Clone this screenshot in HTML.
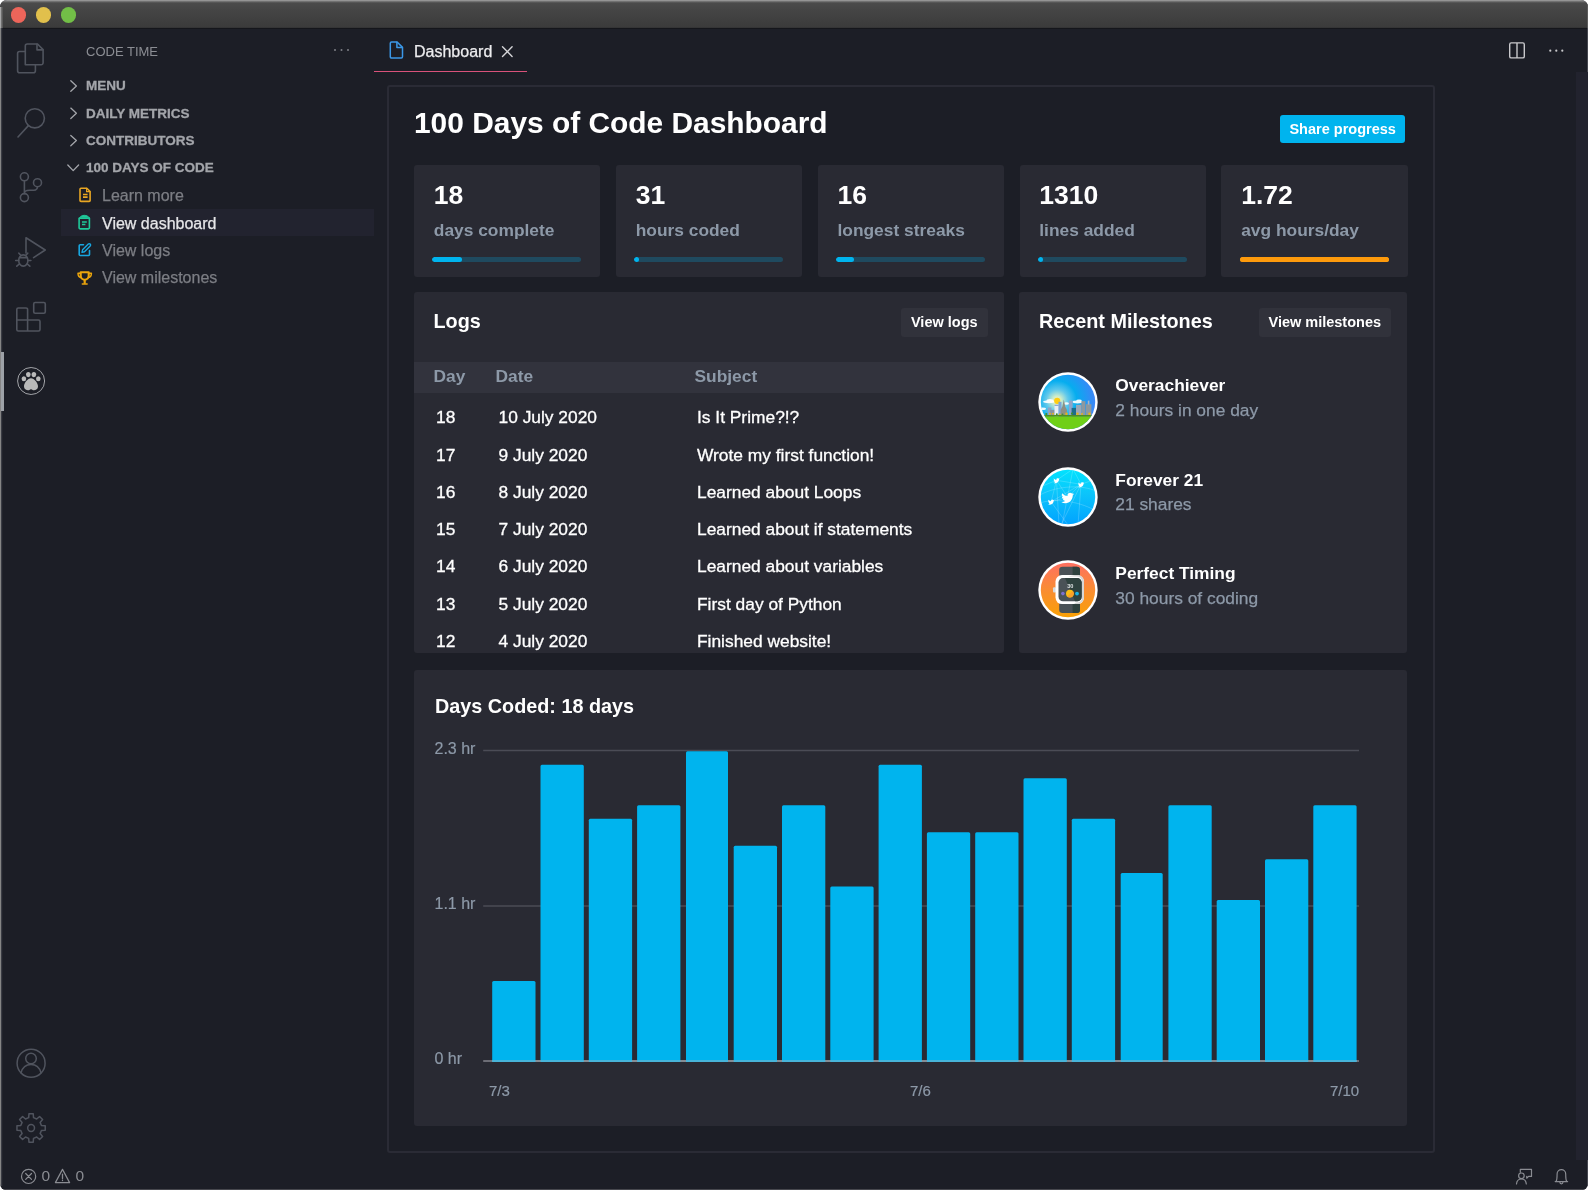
<!DOCTYPE html>
<html lang="en">
<head>
<meta charset="utf-8">
<title>100 Days of Code Dashboard</title>
<style>
*{box-sizing:border-box;margin:0;padding:0}
html,body{width:1588px;height:1190px;overflow:hidden;background:#fff;font-family:"Liberation Sans",sans-serif;}
#win{will-change:transform;position:absolute;left:0;top:0;width:1588px;height:1190px;background:#1c1e26;border-radius:7px 7px 6px 6px;overflow:hidden;}
#edgeL{position:absolute;left:0;top:28px;width:3px;height:1158px;background:linear-gradient(90deg,#858585 0,#858585 1px,#3a3c44 1px,#3a3c44 2px,#22242c 2px,#22242c 3px);}
#edgeT{position:absolute;left:0;top:7px;width:3px;height:21px;background:linear-gradient(90deg,#a8a8a8 0,#a8a8a8 1px,#707070 1px,#707070 2px,#595959 2px,#595959 3px);}
#titlebar{position:absolute;left:0;top:0;width:1588px;height:29px;background:linear-gradient(#9c9c9c 0,#8c8c8c 1px,#6c6c6c 1.6px,#4b4b4b 3px,#454545 10px,#3b3b3b 27.4px,#15161b 28px,#15161b 29px);}
#edgeR{position:absolute;left:1587px;top:4px;width:1px;height:1182px;background:linear-gradient(#5c5c5c 0,#5c5c5c 24px,#45474f 24px);}
.tl{position:absolute;top:7.200px;width:15.400px;height:15.400px;border-radius:50%;}
.abs{position:absolute}
.ico{position:absolute;fill:none;stroke:#50545e;stroke-width:1.6;stroke-linecap:round;stroke-linejoin:round}
/* sidebar */
.sec{-webkit-text-stroke:.3px #a3a5aa;position:absolute;left:86px;font-size:13.5px;font-weight:bold;color:#a3a5aa;letter-spacing:0;white-space:nowrap;line-height:16px}
.item{-webkit-text-stroke-width:.25px;position:absolute;left:102px;font-size:16px;color:#7c7e84;white-space:nowrap;line-height:20px}
.chev{position:absolute;fill:none;stroke:#a3a5aa;stroke-width:1.3;stroke-linecap:round;stroke-linejoin:round}
/* webview */
#panel{position:absolute;left:386.500px;top:84.800px;width:1048px;height:1068px;border:2px solid #2a2b35;border-radius:3px}
.card{position:absolute;top:165px;width:186.3px;height:112px;background:#292a33;border-radius:3px}
.card .n{position:absolute;left:19.8px;top:15px;font-size:26.500px;font-weight:bold;color:#fff;line-height:30px;white-space:nowrap}
.card .l{position:absolute;left:19.8px;top:54px;font-size:17.360px;font-weight:bold;color:#8d99a8;line-height:22px;white-space:nowrap}
.card .bar{position:absolute;left:18.3px;top:92px;width:149px;height:5px;border-radius:3px;background:#1f4a5f;overflow:hidden}
.card .bar i{display:block;height:5px;border-radius:3px;background:#00b4ee}
.box{position:absolute;background:#292a33;border-radius:3px}
.h2{position:absolute;font-size:19.800px;font-weight:bold;color:#fff;line-height:24px;white-space:nowrap}
.btn{position:absolute;background:#31323b;border-radius:3px;color:#fff;font-weight:bold;font-size:14.5px;line-height:30px;text-align:center;white-space:nowrap}
.row{-webkit-text-stroke-width:.3px;position:absolute;left:0;width:590px;height:20px;font-size:17.360px;color:#fff;line-height:20px;white-space:nowrap}
.row span{position:absolute;top:0}
.ms-t{position:absolute;left:96.300px;font-size:17.360px;font-weight:bold;color:#fff;line-height:20px;white-space:nowrap}
.ms-s{-webkit-text-stroke-width:.25px;position:absolute;left:96.300px;font-size:17.360px;color:#8d99a8;line-height:20px;white-space:nowrap}
.ax{-webkit-text-stroke-width:.2px;position:absolute;font-size:15px;color:#8d99a8;line-height:18px;white-space:nowrap}
</style>
</head>
<body>
<div id="win">
  <div id="titlebar"></div>
  <div class="tl" style="left:10.800px;background:#ed655a"></div>
  <div class="tl" style="left:35.700px;background:#e1c04c"></div>
  <div class="tl" style="left:60.600px;background:#72be47"></div>
  <div id="edgeR"></div><div id="edgeL"></div><div id="edgeT"></div>

  <!-- ACTIVITYBAR -->
  <svg class="ico" style="left:0;top:28px" width="62" height="1130" viewBox="0 28 62 1130">
    <!-- files -->
    <path d="M25.3 64.8V46a2 2 0 0 1 2-2h10.2l5.6 5.6v13.2a2 2 0 0 1-2 2z"/>
    <path d="M37 44.3v5.6h5.8"/>
    <path d="M25.3 51.5h-5.7a2 2 0 0 0-2 2v17.3a2 2 0 0 0 2 2h13.8a2 2 0 0 0 2-2v-5.8"/>
    <!-- search -->
    <circle cx="34.8" cy="118.3" r="9.6"/>
    <path d="M28.4 125.6L18 137"/>
    <!-- source control -->
    <circle cx="24.4" cy="176.8" r="4"/>
    <circle cx="37.5" cy="182.7" r="4"/>
    <circle cx="24.4" cy="197.6" r="4"/>
    <path d="M24.4 180.8v12.8M37.5 186.7c0 4-3.5 3.6-8 3.6-3 0-5.1 1-5.1 3.2"/>
    <!-- debug -->
    <path d="M26 253V237.8L45.2 250L33.6 257.6"/>
    <ellipse cx="23.3" cy="260.5" rx="4.6" ry="5.6"/>
    <path d="M19.6 257.6h7.4M20.5 255l-1.6-1.8M26.100 255l1.600-1.800M18.7 260.500h-3M27.900 260.500h3M19.300 264l-2.500 2.200M27.300 264l2.500 2.200"/>
    <!-- extensions -->
    <path d="M27.600 320V309.5a1.500 1.500 0 0 0-1.500-1.500H18.300a1.500 1.500 0 0 0-1.500 1.500V329.500a1.500 1.500 0 0 0 1.500 1.500H38.500a1.500 1.500 0 0 0 1.500-1.500V321.500a1.500 1.500 0 0 0-1.500-1.500H16.800M27.600 320v11"/>
    <rect x="33.700" y="302.500" width="11.600" height="10.800" rx="1.500"/>
    <!-- account -->
    <circle cx="31.100" cy="1063.200" r="14" stroke-width="1.500"/>
    <circle cx="31" cy="1058.500" r="5.300" stroke-width="1.500"/>
    <path d="M21 1072.800c1.500-5.500 5.500-8.300 10-8.300s8.500 2.800 10 8.300" stroke-width="1.500"/>
    <!-- gear -->
    <circle cx="31.100" cy="1128" r="3.400" stroke-width="1.500"/>
    <path stroke-width="1.500" d="M28.68 1117.68L28.96 1113.86L33.24 1113.86L33.52 1117.68L36.69 1118.99L39.59 1116.49L42.61 1119.51L40.11 1122.41L41.42 1125.58L45.24 1125.86L45.24 1130.14L41.42 1130.42L40.11 1133.59L42.61 1136.49L39.59 1139.51L36.69 1137.01L33.52 1138.32L33.24 1142.14L28.96 1142.14L28.68 1138.32L25.51 1137.01L22.61 1139.51L19.59 1136.49L22.09 1133.59L20.78 1130.42L16.96 1130.14L16.96 1125.86L20.78 1125.58L22.09 1122.41L19.59 1119.51L22.61 1116.49L25.51 1118.99Z"/>
  </svg>
  <!-- paw active -->
  <div class="abs" style="left:1px;top:351.500px;width:3px;height:59.500px;background:#9da1a7"></div>
  <svg class="abs" style="left:16px;top:366px" width="30" height="30" viewBox="0 0 30 30">
    <circle cx="15.100" cy="15" r="13.500" fill="none" stroke="#a2a4a8" stroke-width="1"/>
    <g fill="#b9b9b9">
      <ellipse cx="7.900" cy="12.800" rx="2.300" ry="2.500"/>
      <ellipse cx="12.300" cy="8.600" rx="2.300" ry="2.600"/>
      <ellipse cx="17.900" cy="8.600" rx="2.300" ry="2.600"/>
      <ellipse cx="22.300" cy="12.800" rx="2.300" ry="2.500"/>
      <path d="M15 12.300c3.200 0 7 4.800 7 8.200 0 2.600-2.200 3.700-4 3.700-1.300 0-2.300-.8-3-1.300-.7.500-1.700 1.300-3 1.300-1.800 0-4-1.100-4-3.700 0-3.400 3.800-8.200 7-8.200z"/>
    </g>
  </svg>
  <!-- SIDEBAR -->
  <div class="abs" id="ct" style="left:86px;top:43.5px;font-size:13px;color:#8b8d93;line-height:16px;white-space:nowrap">CODE TIME</div>
  <svg class="abs" style="left:332px;top:47px" width="20" height="6"><g fill="#7e8087"><circle cx="3" cy="3" r="1"/><circle cx="9.500" cy="3" r="1"/><circle cx="16" cy="3" r="1"/></g></svg>
  <svg class="chev" style="left:66px;top:78px" width="16" height="100" viewBox="66 78 16 100">
    <path d="M70.800 80.800L76.400 86L70.800 91.200"/>
    <path d="M70.800 108.100L76.400 113.300L70.800 118.500"/>
    <path d="M70.800 135.400L76.400 140.600L70.800 145.800"/>
    <path d="M67.800 165L73.200 170.600L78.600 165"/>
  </svg>
  <div class="sec" id="s1" style="top:78.3px">MENU</div>
  <div class="sec" id="s2" style="top:105.5px">DAILY METRICS</div>
  <div class="sec" id="s3" style="top:132.7px">CONTRIBUTORS</div>
  <div class="sec" id="s4" style="top:160.1px">100 DAYS OF CODE</div>
  <div class="abs" style="left:61px;top:209px;width:313px;height:27px;background:#22232f"></div>
  <div class="item" id="i1" style="top:186px">Learn more</div>
  <div class="item" id="i2" style="top:213.500px;color:#e6e6e8">View dashboard</div>
  <div class="item" id="i3" style="top:241px">View logs</div>
  <div class="item" id="i4" style="top:268.200px">View milestones</div>
  <!-- item icons -->
  <svg class="abs" style="left:76px;top:186px" width="18" height="100" viewBox="76 186 18 100" fill="none" stroke-linecap="round" stroke-linejoin="round">
    <g stroke="#e8a623" stroke-width="1.600">
      <path d="M81 188.200h5.800l3.300 3.300v8.900a1 1 0 0 1-1 1h-8.100a1 1 0 0 1-1-1v-11.200a1 1 0 0 1 1-1z"/>
      <path d="M86.600 188.400v3.300h3.300" stroke-width="1.200"/>
      <path d="M83 194.500h4.600M83 197.100h4.600" stroke-width="1.700" stroke-linecap="butt"/>
    </g>
    <g stroke="#1fc99a" stroke-width="1.600">
      <path d="M79.100 218.200h10.300v9.500a1.200 1.200 0 0 1-1.200 1.200h-7.900a1.200 1.200 0 0 1-1.200-1.200z"/>
      <path d="M79.600 217.800c1.500-3.400 7.800-3.400 9.800 0z" fill="#1fc99a" stroke-width="1"/>
      <path d="M82 222h4.800M82 224.500h3.400" stroke-width="1.300" stroke-linecap="butt"/>
    </g>
    <g stroke="#18a6e0" stroke-width="1.600">
      <path d="M83.500 244.700h-3.300a1 1 0 0 0-1 1v8.800a1 1 0 0 0 1 1h8.300a1 1 0 0 0 1-1v-4"/>
      <path d="M82 252.300l.6-2.500 5.700-5.700a1.300 1.300 0 0 1 1.900 1.900l-5.700 5.700z" stroke-width="1.400"/>
    </g>
    <g stroke="#eba50c" stroke-width="2.1">
      <path d="M80.700 272.300h8v3.400a4 4 0 0 1-8 0z"/>
      <path d="M80 273.300h-2c0 2.700.9 3.900 2.900 4.200M89.400 273.300h2c0 2.700-.9 3.900-2.900 4.200" stroke-width="1.500"/>
      <path d="M84.700 280.400v2.600" stroke-width="2.200"/><path d="M82.300 283.900h4.800" stroke-width="1.500"/>
    </g>
  </svg>
  <!-- TABS -->
  <svg class="abs" style="left:387px;top:40px" width="18" height="20" viewBox="0 0 18 20" fill="none" stroke="#3b98e8" stroke-width="1.500" stroke-linejoin="round" stroke-linecap="round">
    <path d="M3.300 3.200a1.200 1.200 0 0 1 1.200-1.200h5.600l5.400 5.400v9.400a1.200 1.200 0 0 1-1.200 1.200H4.500a1.200 1.200 0 0 1-1.200-1.200z"/><path d="M9.900 2.200v5.400h5.400"/>
  </svg>
  <div class="abs" id="tabt" style="left:414px;top:42.300px;font-size:16px;-webkit-text-stroke:.25px #ececee;color:#ececee;line-height:20px;white-space:nowrap">Dashboard</div>
  <svg class="abs" style="left:500px;top:44px" width="14" height="14" viewBox="0 0 14 14" fill="none" stroke="#d5d5d8" stroke-width="1.400" stroke-linecap="round"><path d="M2.500 2.800l9.600 9.600M12.100 2.800L2.500 12.400"/></svg>
  <div class="abs" style="left:374px;top:70.500px;width:153px;height:1.500px;background:#d9527a"></div>
  <svg class="abs" style="left:1506px;top:40px" width="64" height="22" viewBox="1506 40 64 22" fill="none" stroke="#c9c9cc" stroke-width="1.400">
    <rect x="1509.700" y="42.900" width="14.600" height="15" rx="1.500"/><path d="M1517 43v15"/>
    <g fill="#c9c9cc" stroke="none"><circle cx="1550.300" cy="50.700" r="1.100"/><circle cx="1556.300" cy="50.700" r="1.100"/><circle cx="1562.300" cy="50.700" r="1.100"/></g>
  </svg>
  <div class="abs" style="left:1576px;top:72px;width:12px;height:1088px;background:#22232e"></div>
  <!-- WEBVIEW -->
  <div id="panel"></div>
  <div class="abs" id="h1" style="left:414px;top:105px;font-size:29.900px;font-weight:bold;color:#fff;line-height:36px;white-space:nowrap">100 Days of Code Dashboard</div>
  <div class="btn" id="bshare" style="left:1280px;top:115px;width:125.300px;height:28px;line-height:28px;background:#00b4ee;font-size:14.500px">Share progress</div>
  <div class="card" style="left:414.0px"><div class="n" id="n0">18</div><div class="l" id="l0">days complete</div><div class="bar" style="background:#1f4a5f"><i style="width:30px;background:#00b4ee"></i></div></div>
  <div class="card" style="left:615.9px"><div class="n" id="n1">31</div><div class="l" id="l1">hours coded</div><div class="bar" style="background:#1f4a5f"><i style="width:5.0px;background:#00b4ee"></i></div></div>
  <div class="card" style="left:817.7px"><div class="n" id="n2">16</div><div class="l" id="l2">longest streaks</div><div class="bar" style="background:#1f4a5f"><i style="width:18.500px;background:#00b4ee"></i></div></div>
  <div class="card" style="left:1019.5px"><div class="n" id="n3">1310</div><div class="l" id="l3">lines added</div><div class="bar" style="background:#1f4a5f"><i style="width:5.0px;background:#00b4ee"></i></div></div>
  <div class="card" style="left:1221.4px"><div class="n" id="n4">1.72</div><div class="l" id="l4">avg hours/day</div><div class="bar" style="background:#fd9a0c"><i style="width:149px;background:#fd9a0c"></i></div></div>
  <!-- logs -->
  <div class="box" style="left:414px;top:292px;width:590px;height:361px;overflow:hidden">
    <div class="h2" id="hlogs" style="left:19.500px;top:17px">Logs</div>
    <div class="btn" id="bvl" style="left:487px;top:16px;width:86.500px;height:28.500px;line-height:28px">View logs</div>
    <div class="abs" style="left:0;top:69.500px;width:590px;height:31px;background:#32333d"></div>
    <div class="row" style="top:73.800px;-webkit-text-stroke-width:0;font-weight:bold;color:#8d99a8"><span id="thd" style="left:19.500px">Day</span><span style="left:81.500px">Date</span><span style="left:280.500px">Subject</span></div>
    <div class="row" style="top:115.2px"><span style="left:22px">18</span><span id="rd0" style="left:84.500px">10 July 2020</span><span id="rs0" style="left:283px">Is It Prime?!?</span></div>
    <div class="row" style="top:152.5px"><span style="left:22px">17</span><span id="rd1" style="left:84.500px">9 July 2020</span><span id="rs1" style="left:283px">Wrote my first function!</span></div>
    <div class="row" style="top:189.7px"><span style="left:22px">16</span><span id="rd2" style="left:84.500px">8 July 2020</span><span id="rs2" style="left:283px">Learned about Loops</span></div>
    <div class="row" style="top:227.0px"><span style="left:22px">15</span><span id="rd3" style="left:84.500px">7 July 2020</span><span id="rs3" style="left:283px">Learned about if statements</span></div>
    <div class="row" style="top:264.3px"><span style="left:22px">14</span><span id="rd4" style="left:84.500px">6 July 2020</span><span id="rs4" style="left:283px">Learned about variables</span></div>
    <div class="row" style="top:301.6px"><span style="left:22px">13</span><span id="rd5" style="left:84.500px">5 July 2020</span><span id="rs5" style="left:283px">First day of Python</span></div>
    <div class="row" style="top:338.8px"><span style="left:22px">12</span><span id="rd6" style="left:84.500px">4 July 2020</span><span id="rs6" style="left:283px">Finished website!</span></div>
  </div>
  <!-- milestones -->
  <div class="box" style="left:1019px;top:292px;width:388.300px;height:361px">
    <div class="h2" id="hms" style="left:20px;top:17px">Recent Milestones</div>
    <div class="btn" id="bvm" style="left:239.500px;top:16px;width:132.500px;height:28.500px;line-height:28px">View milestones</div>
    <!-- BADGES -->
    <svg class="abs" style="left:19.400px;top:80.200px" width="60" height="60" viewBox="0 0 60 60">
      <defs>
        <radialGradient id="sky" gradientUnits="userSpaceOnUse" cx="19" cy="28.500" r="44">
          <stop offset="0" stop-color="#fff6a8"/><stop offset=".1" stop-color="#cdeccb"/><stop offset=".25" stop-color="#5fc8ec"/><stop offset=".45" stop-color="#06adef"/><stop offset=".75" stop-color="#2f8ff5"/><stop offset="1" stop-color="#4a7df7"/>
        </radialGradient>
        <clipPath id="cc"><circle cx="30" cy="30" r="27.200"/></clipPath>
      </defs>
      <circle cx="30" cy="30" r="29.700" fill="#fff"/>
      <g clip-path="url(#cc)">
        <rect width="60" height="60" fill="url(#sky)"/>
        <g fill="#fff" opacity=".92"><ellipse cx="11" cy="29.800" rx="6" ry="1.500"/><ellipse cx="12" cy="28.600" rx="3.500" ry="1.600"/><ellipse cx="39.500" cy="30" rx="5" ry="1.400"/><ellipse cx="41" cy="29" rx="2.800" ry="1.400"/><ellipse cx="4.500" cy="36.800" rx="3.500" ry="1.200"/><ellipse cx="28.500" cy="31.500" rx="2.500" ry="1.200"/></g>
        <circle cx="19.200" cy="28.800" r="3.100" fill="#ffcd12"/>
        <rect x="9.800" y="35.500" width="3.600" height="9" fill="#8ea2c4"/>
        <rect x="12.100" y="37.900" width="4.800" height="7" fill="#8792a2"/>
        <rect x="16.500" y="32.800" width="4.200" height="12" fill="#e9eef6"/>
        <rect x="16.500" y="32.800" width="4.200" height="1" fill="#7b96cf"/>
        <rect x="20.500" y="29.800" width="3" height="15" fill="#7da4d6"/>
        <path d="M22.600 44.500v-6.500l1.800-3.500.9-4.500.5-2.600.5 2.600.9 4.500 1.800 3.500v6.500z" fill="#8f8f84"/>
        <rect x="30.900" y="28.500" width="3.700" height="16" fill="#90a4c9"/>
        <rect x="33.600" y="35.900" width="6.100" height="8.500" fill="#1d6c8c"/>
        <rect x="38" y="32.800" width="5.400" height="11.500" fill="#9ba7b8"/>
        <rect x="43.400" y="29.100" width="4" height="15.500" fill="#8d989f"/>
        <rect x="48" y="32.200" width="5.400" height="12.500" fill="#8d989f"/><rect x="49.800" y="28.600" width="1.600" height="4" fill="#a9b6c6"/>
        <g fill="#e4b21e"><circle cx="12" cy="41.800" r="1"/><circle cx="15" cy="41.800" r="1"/><circle cx="21.800" cy="42.600" r="1"/><circle cx="28.500" cy="41.800" r="1.300"/><circle cx="39.500" cy="41.800" r="1.300"/><circle cx="44" cy="42" r="1"/><circle cx="51.500" cy="41.800" r="1.300"/></g>
        <g fill="#3f8f2c"><circle cx="8.300" cy="42" r="1.100"/><circle cx="18.800" cy="42.200" r="1"/><circle cx="34" cy="41.600" r="1.100"/><circle cx="24.500" cy="42.500" r=".9"/></g>
        <rect x="0" y="43" width="60" height="1.800" fill="#4f8c26"/>
        <rect x="0" y="44.600" width="60" height="16" fill="#6fcf17"/>
      </g>
    </svg>
    <svg class="abs" style="left:19.400px;top:174.900px" width="60" height="60" viewBox="0 0 60 60">
      <defs><linearGradient id="tw" x1="0" y1="0" x2="0" y2="1"><stop offset="0" stop-color="#00e6ff"/><stop offset=".45" stop-color="#0cc4fb"/><stop offset="1" stop-color="#00a0ff"/></linearGradient></defs>
      <circle cx="30" cy="30" r="29.700" fill="#fff"/>
      <g clip-path="url(#cc)">
        <rect width="60" height="60" fill="url(#tw)"/>
        <g stroke="#fff" stroke-opacity=".38" stroke-width=".5" fill="none">
          <path d="M18.500 13.300L43 17.300M43 17.300L13.100 34.800M13.100 34.800L18.500 13.300M18.500 13.300L29.600 30M43 17.300L29.600 30M13.100 34.800L29.600 30M35 2L24 58M35 2L43 17.300L40 58M18.500 13.300L21 58M13.100 34.800L30 58M43 17.300L23 58M2 28C20 18 45 18 58 24M2 36C20 30 45 36 58 44M18.500 13.300L35 2M2 20L18.500 13.300M43 17.300L58 12"/>
        </g>
        <g fill="#fff">
          <path transform="translate(23.300 24.600) scale(.53)" d="M23.950 4.570a10 10 0 0 1-2.820.780 4.960 4.960 0 0 0 2.160-2.720c-.950.550-2 .960-3.130 1.180a4.920 4.920 0 0 0-8.380 4.480C7.690 8.100 4.070 6.130 1.640 3.160a4.820 4.820 0 0 0-.670 2.480c0 1.710.870 3.210 2.190 4.100a4.900 4.900 0 0 1-2.230-.620v.060a4.920 4.920 0 0 0 3.950 4.830 5 5 0 0 1-2.210.080 4.940 4.940 0 0 0 4.600 3.420 9.870 9.870 0 0 1-6.100 2.100c-.390 0-.780-.020-1.170-.070a14 14 0 0 0 7.560 2.210c9.050 0 14-7.500 14-13.980 0-.210 0-.420-.020-.630A9.940 9.940 0 0 0 24 4.590z"/>
          <path transform="translate(15.400 10.600) scale(.26)" d="M23.950 4.570a10 10 0 0 1-2.820.780 4.960 4.960 0 0 0 2.160-2.720c-.950.550-2 .960-3.130 1.180a4.920 4.920 0 0 0-8.380 4.480C7.690 8.100 4.070 6.130 1.640 3.160a4.820 4.820 0 0 0-.670 2.480c0 1.710.870 3.210 2.190 4.100a4.900 4.900 0 0 1-2.230-.620v.060a4.920 4.920 0 0 0 3.950 4.830 5 5 0 0 1-2.210.080 4.940 4.940 0 0 0 4.600 3.420 9.870 9.870 0 0 1-6.100 2.100c-.390 0-.780-.020-1.170-.070a14 14 0 0 0 7.560 2.210c9.050 0 14-7.500 14-13.980 0-.210 0-.420-.020-.630A9.940 9.940 0 0 0 24 4.590z"/>
          <path transform="translate(40 14.600) scale(.26)" d="M23.950 4.570a10 10 0 0 1-2.820.780 4.960 4.960 0 0 0 2.160-2.720c-.950.550-2 .960-3.130 1.180a4.920 4.920 0 0 0-8.380 4.480C7.690 8.100 4.070 6.130 1.640 3.160a4.820 4.820 0 0 0-.670 2.480c0 1.710.870 3.210 2.190 4.100a4.900 4.900 0 0 1-2.230-.620v.060a4.920 4.920 0 0 0 3.950 4.830 5 5 0 0 1-2.210.080 4.940 4.940 0 0 0 4.600 3.420 9.870 9.870 0 0 1-6.100 2.100c-.390 0-.780-.020-1.170-.070a14 14 0 0 0 7.560 2.210c9.050 0 14-7.500 14-13.980 0-.210 0-.420-.020-.630A9.940 9.940 0 0 0 24 4.590z"/>
          <path transform="translate(10 32) scale(.26)" d="M23.950 4.570a10 10 0 0 1-2.820.780 4.960 4.960 0 0 0 2.160-2.720c-.950.550-2 .960-3.130 1.180a4.920 4.920 0 0 0-8.380 4.480C7.690 8.100 4.070 6.130 1.640 3.160a4.820 4.820 0 0 0-.670 2.480c0 1.710.870 3.210 2.190 4.100a4.900 4.900 0 0 1-2.230-.620v.060a4.920 4.920 0 0 0 3.950 4.830 5 5 0 0 1-2.210.080 4.940 4.940 0 0 0 4.600 3.420 9.870 9.870 0 0 1-6.100 2.100c-.390 0-.780-.020-1.170-.070a14 14 0 0 0 7.560 2.210c9.050 0 14-7.500 14-13.980 0-.210 0-.420-.020-.630A9.940 9.940 0 0 0 24 4.590z"/>
        </g>
      </g>
    </svg>
    <svg class="abs" style="left:19.400px;top:268px" width="60" height="60" viewBox="0 0 60 60">
      <defs><linearGradient id="or" x1="0" y1="0" x2="0" y2="1"><stop offset="0" stop-color="#ff6d66"/><stop offset=".5" stop-color="#f98d33"/><stop offset="1" stop-color="#f9a200"/></linearGradient></defs>
      <circle cx="30" cy="30" r="29.700" fill="#fff"/>
      <g clip-path="url(#cc)">
        <rect width="60" height="60" fill="url(#or)"/>
        <path d="M21.200 16V10a3.300 3.300 0 0 1 3.300-3.300h14.200A3.300 3.300 0 0 1 42 10v6z" fill="#4a5257"/>
        <path d="M34.600 6.700h4.100A3.300 3.300 0 0 1 42 10v6h-7.400z" fill="#2f423f"/>
        <path d="M21.200 43v6.800a3.300 3.300 0 0 0 3.300 3.300h14.200a3.300 3.300 0 0 0 3.300-3.300V43z" fill="#4a5257"/>
        <path d="M34.600 53.100h4.100a3.300 3.300 0 0 0 3.300-3.300V43h-7.400z" fill="#2f423f"/>
        <rect x="15" y="27.2" width="3" height="5.2" rx="1" fill="#d9d9d9"/>
        <rect x="17.500" y="15.100" width="28.500" height="29" rx="6.500" fill="#fff"/>
        <path d="M37 15.100h2.500a6.500 6.500 0 0 1 6.500 6.500v16a6.500 6.500 0 0 1-6.500 6.500H36l2-1.500h1a5 5 0 0 0 5-5v-16a5 5 0 0 0-5-5h-9z" fill="#d6d6d6"/>
        <rect x="20.500" y="18.100" width="23.200" height="23.200" rx="4.500" fill="#4a5257"/>
        <path d="M27 18.100h12.200a4.500 4.500 0 0 1 4.500 4.500v14.200a4.500 4.500 0 0 1-4.500 4.500H37z" fill="#2f423f"/>
        <text x="32.300" y="27.600" text-anchor="middle" font-family="Liberation Sans, sans-serif" font-weight="bold" font-size="5.600" fill="#dfe3e4">30</text>
        <circle cx="24.9" cy="33.6" r="1.8" fill="#7b6fd0"/>
        <circle cx="31.900" cy="33.600" r="3.900" fill="#fbbd12"/>
        <path d="M34.700 30.900a3.900 3.900 0 0 1-5.500 5.500z" fill="#fb9f2a"/>
        <circle cx="39" cy="33.6" r="1.9" fill="#19b3e6"/>
      </g>
    </svg>
    <div class="ms-t" id="m1t" style="top:83px">Overachiever</div><div class="ms-s" id="m1s" style="top:108px">2 hours in one day</div>
    <div class="ms-t" id="m2t" style="top:177.500px">Forever 21</div><div class="ms-s" id="m2s" style="top:202px">21 shares</div>
    <div class="ms-t" id="m3t" style="top:270.500px">Perfect Timing</div><div class="ms-s" id="m3s" style="top:295.500px">30 hours of coding</div>
  </div>
  <!-- chart -->
  <div class="box" style="left:414px;top:670px;width:993.300px;height:455.500px"></div>
  <div class="h2" id="hch" style="left:435px;top:694px">Days Coded: 18 days</div>
  <div class="ax" id="ax1" style="left:434.500px;top:739.500px;font-size:16px">2.3 hr</div>
  <div class="ax" id="ax2" style="left:434.500px;top:894.900px;font-size:16px">1.1 hr</div>
  <div class="ax" id="ax3" style="left:434.500px;top:1050.400px;font-size:16px">0 hr</div>
  <div class="ax" id="ax4" style="left:489px;top:1081.900px">7/3</div>
  <div class="ax" id="ax5" style="left:910px;top:1081.900px">7/6</div>
  <div class="ax" id="ax6" style="left:1330px;top:1081.900px">7/10</div>
  <svg class="abs" style="left:480px;top:745px" width="890" height="325" viewBox="480 745 890 325">
    <path d="M483.2 750.6H1359M483.2 906H1359" stroke="#4b4c56" stroke-width="1.5"/>
    <path d="M483.2 1061H1359" stroke="#6c6d76" stroke-width="2"/>
    <g fill="#00b4ee">
      <path d="M492.2 1062V982.5a1.500 1.500 0 0 1 1.500-1.500h40.3a1.500 1.500 0 0 1 1.500 1.500V1062z"/>
      <path d="M540.5 1062V766.2a1.500 1.500 0 0 1 1.500-1.500h40.3a1.500 1.500 0 0 1 1.500 1.500V1062z"/>
      <path d="M588.8 1062V820.3a1.500 1.500 0 0 1 1.500-1.500h40.3a1.500 1.500 0 0 1 1.500 1.500V1062z"/>
      <path d="M637.1 1062V806.8a1.500 1.500 0 0 1 1.500-1.500h40.3a1.500 1.500 0 0 1 1.500 1.500V1062z"/>
      <path d="M686.0 1062V752.7a1.500 1.500 0 0 1 1.500-1.500h39a1.500 1.500 0 0 1 1.500 1.500V1062z"/>
      <path d="M733.7 1062V847.3a1.500 1.500 0 0 1 1.500-1.500h40.3a1.500 1.500 0 0 1 1.500 1.500V1062z"/>
      <path d="M782.0 1062V806.8a1.500 1.500 0 0 1 1.500-1.500h40.3a1.500 1.500 0 0 1 1.500 1.500V1062z"/>
      <path d="M830.3 1062V887.9a1.500 1.500 0 0 1 1.500-1.500h40.3a1.500 1.500 0 0 1 1.500 1.500V1062z"/>
      <path d="M878.6 1062V766.2a1.500 1.500 0 0 1 1.500-1.500h40.3a1.500 1.500 0 0 1 1.500 1.500V1062z"/>
      <path d="M926.9 1062V833.8a1.500 1.500 0 0 1 1.500-1.500h40.3a1.500 1.500 0 0 1 1.500 1.500V1062z"/>
      <path d="M975.2 1062V833.8a1.500 1.500 0 0 1 1.500-1.500h40.3a1.500 1.500 0 0 1 1.500 1.500V1062z"/>
      <path d="M1023.5 1062V779.7a1.500 1.500 0 0 1 1.500-1.500h40.3a1.500 1.500 0 0 1 1.500 1.500V1062z"/>
      <path d="M1071.8 1062V820.3a1.500 1.500 0 0 1 1.500-1.500h40.3a1.500 1.500 0 0 1 1.500 1.500V1062z"/>
      <path d="M1120.7 1062V874.4a1.500 1.500 0 0 1 1.500-1.500h39a1.500 1.500 0 0 1 1.500 1.500V1062z"/>
      <path d="M1168.4 1062V806.8a1.500 1.500 0 0 1 1.500-1.500h40.3a1.500 1.500 0 0 1 1.500 1.500V1062z"/>
      <path d="M1216.7 1062V901.4a1.500 1.500 0 0 1 1.500-1.500h40.3a1.500 1.500 0 0 1 1.500 1.500V1062z"/>
      <path d="M1265.0 1062V860.8a1.500 1.500 0 0 1 1.500-1.500h40.3a1.500 1.500 0 0 1 1.500 1.500V1062z"/>
      <path d="M1313.3 1062V806.8a1.500 1.500 0 0 1 1.500-1.500h40.3a1.500 1.500 0 0 1 1.500 1.500V1062z"/>
    </g>
    <path d="M492 1061H1357" stroke="#a9b4bd" stroke-opacity=".42" stroke-width="2"/>
  </svg>
  <!-- STATUS -->
  <svg class="abs" style="left:18px;top:1164px" width="72" height="24" viewBox="18 1164 72 24" fill="none" stroke="#8a8c92" stroke-width="1.200" stroke-linecap="round" stroke-linejoin="round">
    <circle cx="28.600" cy="1176.400" r="7.100"/><path d="M25.700 1173.500l5.800 5.800M31.500 1173.500l-5.800 5.800"/>
    <path d="M62.500 1169.400L69.600 1182.600H55.400z"/><path d="M62.500 1174.200v4.300M62.500 1180.200v.4" stroke-width="1.300"/>
  </svg>
  <div class="abs" id="st0" style="left:41.500px;top:1166.500px;font-size:15.500px;color:#8a8c92;line-height:18px">0</div>
  <div class="abs" style="left:75.500px;top:1166.500px;font-size:15.500px;color:#8a8c92;line-height:18px">0</div>
  <svg class="abs" style="left:1512px;top:1166px" width="62" height="22" viewBox="1512 1166 62 22" fill="none" stroke="#8a8c92" stroke-width="1.200" stroke-linecap="round" stroke-linejoin="round">
    <path d="M1520.300 1172.300v-3h11.200v7.100h-2.900l-1.900 1.800v-1.800"/>
    <circle cx="1521.400" cy="1175.800" r="2.800"/><path d="M1516.500 1184c.3-3.200 2.200-5 4.900-5s4.600 1.800 4.900 5"/>
    <path d="M1555.2 1181.6h12.4M1556.1 1181.4c.9-1.6 1-3.2 1-7.4a4.3 4.3 0 0 1 8.6 0c0 4.2.1 5.800 1 7.4"/><path d="M1559.9 1182.3a1.500 1.500 0 0 0 3 0"/>
  </svg>
  <div class="abs" style="left:0;top:1188.500px;width:1588px;height:2px;background:#47484e"></div>
</div>
</body>
</html>
